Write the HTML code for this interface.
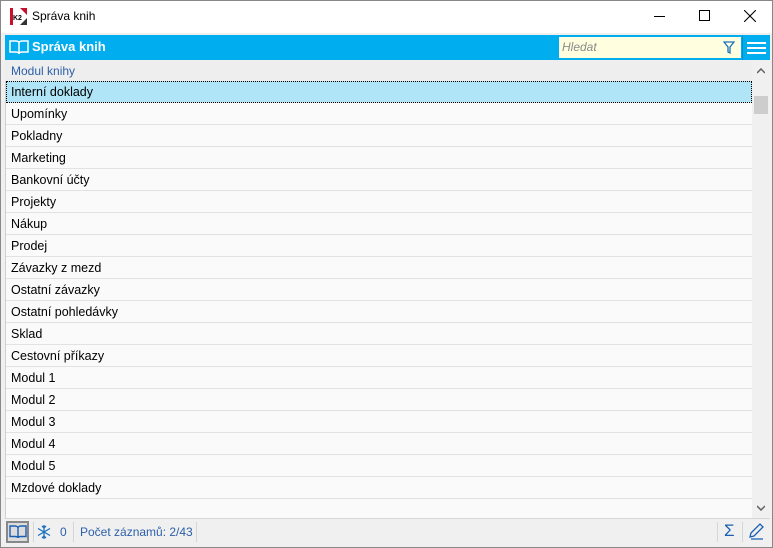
<!DOCTYPE html>
<html><head><meta charset="utf-8"><style>
*{margin:0;padding:0;box-sizing:border-box}
body{width:773px;height:548px;background:#fff;font-family:"Segoe UI","Liberation Sans",sans-serif;font-size:12px;position:relative;overflow:hidden}
.win{position:absolute;left:0;top:0;width:773px;height:548px;border:1px solid #888;background:#f0f0f0}
.title{position:absolute;left:0;top:0;width:771px;height:32px;background:#fff}
.title .t{position:absolute;left:31px;top:8px;font-size:12px;color:#000}
.hdr{position:absolute;left:4px;top:34px;width:765px;height:25px;background:#00adef}
.hdr .t{position:absolute;left:27px;top:4px;color:#fff;font-weight:bold;font-size:13px}
.search{position:absolute;left:554px;top:2px;width:182px;height:21px;background:#ffffe0}
.search span{position:absolute;left:3px;top:3px;color:#8a8a8a;font-style:italic;font-size:12px}
.colh{position:absolute;left:4px;top:59px;width:747px;height:21px;background:#eee;color:#2c5fa8;padding:4px 0 0 6px;font-size:12px}
.rows{position:absolute;left:4px;top:80px;width:747px;height:437px;background:#fafafa;border-left:1px solid #d0d0d0}
.r{height:22px;border-bottom:1px solid #e2e2e2;padding:4px 0 0 5px;font-size:12.5px;color:#000}
.sel{background:#b0e5f8;outline:1px dotted #000;outline-offset:-1px}
.sb{position:absolute;left:751px;top:59px;width:18px;height:458px;background:#f0f0f0}
.thumb{position:absolute;left:2px;top:36px;width:14px;height:18px;background:#cdcdcd}
.status{position:absolute;left:4px;top:517px;width:765px;height:27px;background:#f0f0f0;border-top:1px solid #d6d6d6;color:#2c5fa8}
.sep{position:absolute;top:3px;width:1px;height:20px;background:#d6d6d6}
</style></head><body>
<div class="win">
<div class="title">
<svg style="position:absolute;left:9px;top:7px" width="17" height="17"><rect x="0" y="0" width="17" height="17" fill="#fff"/><rect x="0" y="0" width="3" height="17" fill="#c8102e"/><polygon points="10,0 17,0 17,7" fill="#c8102e"/><polygon points="10,17 17,17 17,10" fill="#333"/><text x="3" y="12" font-size="7" font-weight="bold" font-family="Liberation Sans">K2</text></svg>
<div class="t">Správa knih</div>
<div style="position:absolute;left:653px;top:15px;width:11px;height:1px;background:#000"></div>
<div style="position:absolute;left:698px;top:9px;width:11px;height:11px;border:1px solid #000"></div>
<svg style="position:absolute;left:743px;top:9px" width="12" height="12"><path d="M0 0L12 12M12 0L0 12" stroke="#000" stroke-width="1.1"/></svg>
</div>
<div class="hdr">
<svg style="position:absolute;left:4px;top:4px" width="20" height="17"><path d="M1 2h6c2 0 3 1 3 2v11c0-1-1-2-3-2H1z M19 2h-6c-2 0-3 1-3 2v11c0-1 1-2 3-2h6z" fill="none" stroke="#fff" stroke-width="1.5"/></svg>
<div class="t">Správa knih</div>
<div class="search"><span>Hledat</span>
<svg style="position:absolute;left:164px;top:4px" width="12" height="14"><path d="M1 1h10L7 6v6l-2-1V6z" fill="none" stroke="#1a6fbf" stroke-width="1.3"/></svg></div>
<div style="position:absolute;left:737px;top:0;width:1px;height:25px;background:#0090cc"></div>
<div style="position:absolute;left:742px;top:7px;width:19px;height:2px;background:#fff"></div>
<div style="position:absolute;left:742px;top:12px;width:19px;height:2px;background:#fff"></div>
<div style="position:absolute;left:742px;top:17px;width:19px;height:2px;background:#fff"></div>
</div>
<div class="colh">Modul knihy</div>
<div class="rows">
<div class="r sel">Interní doklady</div>
<div class="r">Upomínky</div>
<div class="r">Pokladny</div>
<div class="r">Marketing</div>
<div class="r">Bankovní účty</div>
<div class="r">Projekty</div>
<div class="r">Nákup</div>
<div class="r">Prodej</div>
<div class="r">Závazky z mezd</div>
<div class="r">Ostatní závazky</div>
<div class="r">Ostatní pohledávky</div>
<div class="r">Sklad</div>
<div class="r">Cestovní příkazy</div>
<div class="r">Modul 1</div>
<div class="r">Modul 2</div>
<div class="r">Modul 3</div>
<div class="r">Modul 4</div>
<div class="r">Modul 5</div>
<div class="r">Mzdové doklady</div>
</div>
<div class="sb">
<svg style="position:absolute;left:5px;top:8px" width="8" height="6"><path d="M0 5L4 1L8 5" fill="none" stroke="#606060" stroke-width="1.5"/></svg>
<div class="thumb"></div>
<svg style="position:absolute;left:5px;top:445px" width="8" height="6"><path d="M0 1L4 5L8 1" fill="none" stroke="#606060" stroke-width="1.5"/></svg>
</div>
<div class="status">
<div style="position:absolute;left:1px;top:2px;width:23px;height:22px;border:2px solid #888;background:#dcdcdc"></div>
<svg style="position:absolute;left:4px;top:6px" width="18" height="14"><path d="M1 1h5c2 0 3 1 3 2v10c0-1-1-1.5-3-1.5H1z M17 1h-5c-2 0-3 1-3 2v10c0-1 1-1.5 3-1.5h5z" fill="none" stroke="#1a5fb4" stroke-width="1.4"/></svg>
<div class="sep" style="left:28px"></div>
<svg style="position:absolute;left:31px;top:5px" width="16" height="16"><g stroke="#1a6fbf" stroke-width="1.3" fill="none"><path d="M8 1v14M2 4.5l12 7M2 11.5l12-7M6 2l2 2 2-2M6 14l2-2 2 2"/></g></svg>
<span style="position:absolute;left:55px;top:6px">0</span>
<div class="sep" style="left:68px"></div>
<span style="position:absolute;left:75px;top:6px">Počet záznamů: 2/43</span>
<div class="sep" style="left:191px"></div>
<div class="sep" style="left:712px"></div>
<span style="position:absolute;left:719px;top:2px;font-size:17px;color:#1a5fb4">Σ</span>
<div class="sep" style="left:737px"></div>
<svg style="position:absolute;left:742px;top:4px" width="18" height="18"><path d="M3 14l1-4 9-9 3 3-9 9z M4 16h12" fill="none" stroke="#1a5fb4" stroke-width="1.3"/></svg>
</div>
</div>
</body></html>
